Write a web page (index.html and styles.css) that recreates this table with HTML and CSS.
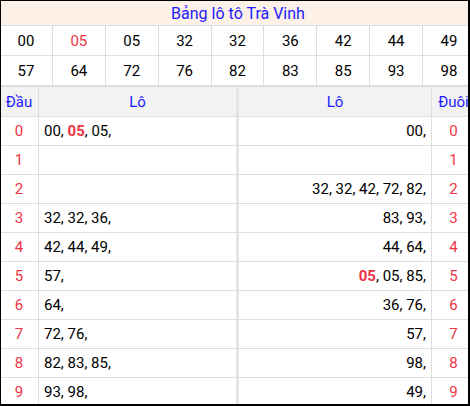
FILE: index.html
```html
<!DOCTYPE html>
<html lang="vi">
<head>
  <meta charset="UTF-8">
  <meta name="viewport" content="width=device-width, initial-scale=1">
  <title>Bảng lô tô Trà Vinh</title>
  <link rel="stylesheet" href="styles.css">
</head>
<body>
  <div class="box">
    <table class="loto">
      <tr><td class="title" colspan="9">Bảng lô tô Trà Vinh</td></tr>
      <tr>
        <td>00</td><td class="hit">05</td><td>05</td><td>32</td><td>32</td><td>36</td><td>42</td><td>44</td><td>49</td>
      </tr>
      <tr>
        <td>57</td><td>64</td><td>72</td><td>76</td><td>82</td><td>83</td><td>85</td><td>93</td><td>98</td>
      </tr>
    </table>

    <table class="dauduoi">
      <tr>
        <th class="c-dau">Đầu</th><th class="c-left">Lô</th><th class="c-right">Lô</th><th class="c-duoi">Đuôi</th>
      </tr>
      <tr><td class="num">0</td><td class="left">00, <b>05</b>, 05,</td><td class="right">00,</td><td class="num">0</td></tr>
      <tr><td class="num">1</td><td class="left"></td><td class="right"></td><td class="num">1</td></tr>
      <tr><td class="num">2</td><td class="left"></td><td class="right">32, 32, 42, 72, 82,</td><td class="num">2</td></tr>
      <tr><td class="num">3</td><td class="left">32, 32, 36,</td><td class="right">83, 93,</td><td class="num">3</td></tr>
      <tr><td class="num">4</td><td class="left">42, 44, 49,</td><td class="right">44, 64,</td><td class="num">4</td></tr>
      <tr><td class="num">5</td><td class="left">57,</td><td class="right"><b>05</b>, 05, 85,</td><td class="num">5</td></tr>
      <tr><td class="num">6</td><td class="left">64,</td><td class="right">36, 76,</td><td class="num">6</td></tr>
      <tr><td class="num">7</td><td class="left">72, 76,</td><td class="right">57,</td><td class="num">7</td></tr>
      <tr><td class="num">8</td><td class="left">82, 83, 85,</td><td class="right">98,</td><td class="num">8</td></tr>
      <tr><td class="num">9</td><td class="left">93, 98,</td><td class="right">49,</td><td class="num">9</td></tr>
    </table>
  </div>
</body>
</html>
```

FILE: styles.css
```css
body {
  margin: 0;
  background: #fff;
  font-family: Roboto, "Liberation Sans", Arial, sans-serif;
  font-size: 15px;
  color: #000;
}
.box {
  width: 470px;
  height: 406px;
  box-sizing: border-box;
  border: 1px solid #000;
  border-right-width: 2px;
  border-bottom-width: 2px;
  overflow: hidden;
}
table {
  border-collapse: separate;
  border-spacing: 0;
  table-layout: fixed;
  width: 476px;
  margin-left: -1px;
}
td, th {
  padding: 0;
  box-sizing: border-box;
  border-right: 1px solid #ddd;
  border-bottom: 1px solid #ddd;
  vertical-align: middle;
}

/* bang tren */
.loto td {
  height: 30px;
  text-align: center;
}
.loto td.title {
  height: 25px;
  background: #fdf0e6;
  color: #1c1cff;
  font-size: 16px;
  border-right: none;
}
.loto td.hit {
  color: #ee3344;
}

/* bang dau duoi */
.dauduoi {
  border-top: 1px solid #ddd;
}
.dauduoi th {
  height: 30px;
  background: #f2f2f2;
  color: #1c1cff;
  font-weight: normal;
}
.dauduoi td {
  height: 29px;
}
.c-dau { width: 39px; }
.c-left { width: 200px; }
.c-right { width: 193px; }
.c-duoi { width: 44px; }
.dauduoi .c-left,
.dauduoi .left {
  border-right: 3px solid #e4e4e4;
}
.num {
  text-align: center;
  color: #ee3344;
}
.left {
  text-align: left;
  padding-left: 5px;
}
.right {
  text-align: right;
  padding-right: 5px;
}
.dauduoi b {
  color: #ee3344;
}
```
